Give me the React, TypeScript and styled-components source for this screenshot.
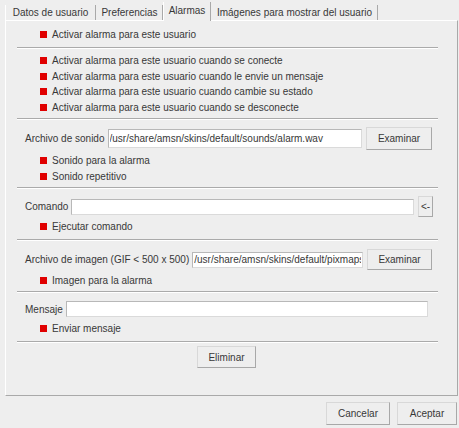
import React from "react";
import styled, { createGlobalStyle } from "styled-components";

const Global = createGlobalStyle`
  html, body {
    margin: 0;
    padding: 0;
    background: #eeeeee;
  }
  body {
    font-family: "Liberation Sans", Arial, sans-serif;
    font-size: 10px;
    color: #383838;
  }
  * { box-sizing: border-box; }
`;

const Window = styled.div`
  width: 459px;
  height: 428px;
  display: flex;
  flex-direction: column;
  background: #eeeeee;
  overflow: hidden;
`;

const TabBar = styled.div`
  display: flex;
  align-items: flex-end;
  height: 20px;
  padding-left: 5px;
`;

const Tab = styled.div<{ $w: number; $active?: boolean; $first?: boolean }>`
  position: relative;
  width: ${(p) => p.$w}px;
  height: ${(p) => (p.$active ? 19 : 15)}px;
  margin-bottom: ${(p) => (p.$active ? -1 : 0)}px;
  z-index: ${(p) => (p.$active ? 1 : 0)};
  display: flex;
  align-items: center;
  justify-content: center;
  padding-bottom: ${(p) => (p.$active ? 3 : 0)}px;
  background: #eeeeee;
  border-left: 1px solid ${(p) => (p.$active || p.$first ? "#ffffff" : "transparent")};
  border-right: 1px solid #a9a9a9;
  white-space: nowrap;
`;

const Panel = styled.div`
  margin-left: 5px;
  width: 453px;
  height: 376px;
  border-top: 1px solid #ffffff;
  border-left: 1px solid #ffffff;
  border-right: 1px solid #a9a9a9;
  border-bottom: 1px solid #a9a9a9;
  padding: 0 19px 0 11px;
  display: flex;
  flex-direction: column;
`;

const Section = styled.div<{ $pt: number; $pb: number }>`
  display: flex;
  flex-direction: column;
  padding-top: ${(p) => p.$pt}px;
  padding-bottom: ${(p) => p.$pb}px;
`;

const Divider = styled.div`
  height: 2px;
  border-top: 1px solid #aaaaaa;
  border-bottom: 1px solid #ffffff;
`;

const CheckRow = styled.div`
  height: 15.5px;
  display: flex;
  align-items: center;
  padding-left: 23px;
  gap: 5px;
  white-space: nowrap;
`;

const CheckBox = styled.span`
  width: 7px;
  height: 7px;
  background: #e00000;
  flex: none;
`;

const FieldRow = styled.div<{ $h: number; $pr: number; $mb: number }>`
  height: ${(p) => p.$h}px;
  display: flex;
  align-items: center;
  padding-left: 8px;
  padding-right: ${(p) => p.$pr}px;
  margin-bottom: ${(p) => p.$mb}px;
`;

const Label = styled.span`
  white-space: nowrap;
  margin-right: 3px;
`;

const TextInput = styled.input<{ $h: number }>`
  flex: 1;
  min-width: 0;
  height: ${(p) => p.$h}px;
  background: #ffffff;
  border: 1px solid;
  border-color: #b8b8b8 #dadada #dadada #b8b8b8;
  padding: 0 1px;
  font-family: "Liberation Sans", Arial, sans-serif;
  font-size: 10px;
  color: #383838;
  outline: none;
`;

const Button = styled.button<{ $w: number; $h: number; $ml?: number }>`
  width: ${(p) => p.$w}px;
  height: ${(p) => p.$h}px;
  margin-left: ${(p) => p.$ml ?? 0}px;
  flex: none;
  padding: 0;
  background: #eeeeee;
  border: 1px solid;
  border-color: #d8d8d8 #a8a8a8 #a8a8a8 #d8d8d8;
  font-family: "Liberation Sans", Arial, sans-serif;
  font-size: 10px;
  color: #383838;
  display: flex;
  align-items: center;
  justify-content: center;
`;

const Center = styled.div`
  display: flex;
  justify-content: center;
  padding-right: 2px;
`;

const Footer = styled.div`
  display: flex;
  justify-content: flex-end;
  gap: 7px;
  padding: 6px 2px 0 0;
`;

const Check: React.FC<{ children: React.ReactNode }> = ({ children }) => (
  <CheckRow>
    <CheckBox />
    <span>{children}</span>
  </CheckRow>
);

export default function App() {
  return (
    <Window>
      <Global />
      <TabBar>
        <Tab $w={91} $first>Datos de usuario</Tab>
        <Tab $w={67}>Preferencias</Tab>
        <Tab $w={48} $active>Alarmas</Tab>
        <Tab $w={167}>Imágenes para mostrar del usuario</Tab>
      </TabBar>
      <Panel>
        <Section $pt={6} $pb={4.5}>
          <Check>Activar alarma para este usuario</Check>
        </Section>
        <Divider />
        <Section $pt={4} $pb={3}>
          <Check>Activar alarma para este usuario cuando se conecte</Check>
          <Check>Activar alarma para este usuario cuando le envie un mensaje</Check>
          <Check>Activar alarma para este usuario cuando cambie su estado</Check>
          <Check>Activar alarma para este usuario cuando se desconecte</Check>
        </Section>
        <Divider />
        <Section $pt={7} $pb={3}>
          <FieldRow $h={23} $pr={6} $mb={3}>
            <Label>Archivo de sonido</Label>
            <TextInput $h={19} readOnly value="/usr/share/amsn/skins/default/sounds/alarm.wav" />
            <Button $w={66} $h={23} $ml={4}>Examinar</Button>
          </FieldRow>
          <Check>Sonido para la alarma</Check>
          <Check>Sonido repetitivo</Check>
        </Section>
        <Divider />
        <Section $pt={7} $pb={4.5}>
          <FieldRow $h={21} $pr={5} $mb={2}>
            <Label>Comando</Label>
            <TextInput $h={16} readOnly value="" />
            <Button $w={15} $h={21} $ml={4}>&lt;-</Button>
          </FieldRow>
          <Check>Ejecutar comando</Check>
        </Section>
        <Divider />
        <Section $pt={8} $pb={2.5}>
          <FieldRow $h={21} $pr={6} $mb={3}>
            <Label>Archivo de imagen (GIF &lt; 500 x 500)</Label>
            <TextInput $h={16} readOnly value="/usr/share/amsn/skins/default/pixmaps/alarm.png" />
            <Button $w={65} $h={21} $ml={4}>Examinar</Button>
          </FieldRow>
          <Check>Imagen para la alarma</Check>
        </Section>
        <Divider />
        <Section $pt={8} $pb={4.5}>
          <FieldRow $h={16} $pr={10} $mb={4}>
            <Label>Mensaje</Label>
            <TextInput $h={16} readOnly value="" />
          </FieldRow>
          <Check>Enviar mensaje</Check>
        </Section>
        <Divider />
        <Section $pt={3} $pb={0}>
          <Center>
            <Button $w={59} $h={22}>Eliminar</Button>
          </Center>
        </Section>
      </Panel>
      <Footer>
        <Button $w={64} $h={23}>Cancelar</Button>
        <Button $w={60} $h={23}>Aceptar</Button>
      </Footer>
    </Window>
  );
}
